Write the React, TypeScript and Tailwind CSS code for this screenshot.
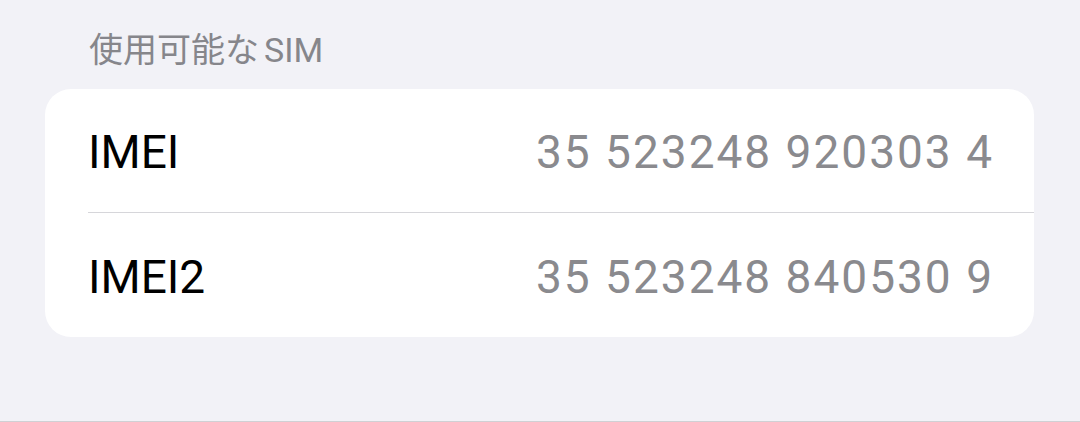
import React from 'react';

type Row = { label: string; value: string };

const rows: Row[] = [
  { label: 'IMEI', value: '35 523248 920303 4' },
  { label: 'IMEI2', value: '35 523248 840530 9' },
];

const font = { fontFamily: 'Roboto, "Noto Sans CJK JP", sans-serif' };

const App: React.FC = () => {
  return (
    <div className="h-[422px] w-full bg-[#f2f2f7] border-b border-[#d0d0d4]" style={font}>
      {/* Section header */}
      <div className="pt-[30px] pl-[89px] h-[89px]">
        <h2 className="text-[34px] leading-[40px] text-[#86868b] font-normal">
          使用可能な<span className="ml-[5px]">SIM</span>
        </h2>
      </div>

      {/* Card */}
      <div className="ml-[45px] mr-[46px] bg-white rounded-[26px] overflow-hidden">
        {rows.map((row, i) => (
          <div key={row.label} className="pl-[43px]">
            <div
              className={
                'flex items-center justify-between h-[124px] pt-[4px] pr-[42px] ' +
                (i < rows.length - 1 ? 'border-b border-[#d6d6da] h-[123px]' : '')
              }
            >
              <span className="text-[46px] text-black">{row.label}</span>
              <span className="text-[46px] text-[#8a8a8e] tracking-[2px] -mr-[2px]">{row.value}</span>
            </div>
          </div>
        ))}
      </div>
    </div>
  );
};

export default App;
